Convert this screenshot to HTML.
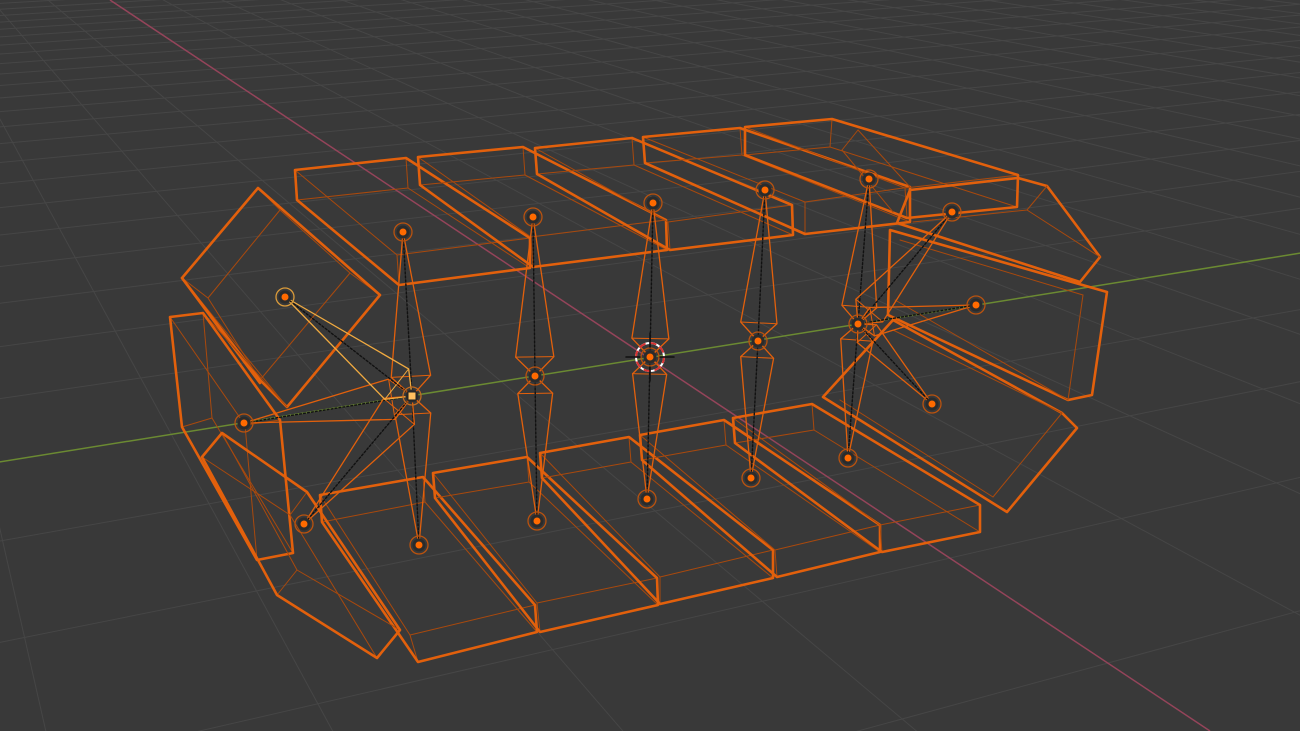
<!DOCTYPE html>
<html><head><meta charset="utf-8"><style>
html,body{margin:0;padding:0;background:#393939;overflow:hidden}
svg{display:block}
</style></head><body>
<svg id="s" xmlns="http://www.w3.org/2000/svg" width="1300" height="731" viewBox="0 0 1300 731">
<rect width="1300" height="731" fill="#393939"/>
<g id="grid"></g>
<line x1="-300" y1="510" x2="1600" y2="205" stroke="#6b8a32" stroke-width="1.5"/>
<line x1="110" y1="0" x2="1210" y2="731" stroke="#94445a" stroke-width="1.5"/>
<g id="obj" fill="none" stroke-linejoin="round" stroke-linecap="round"></g>
</svg>
<script>
(function(){
var NS="http://www.w3.org/2000/svg";
var grid=document.getElementById('grid'),obj=document.getElementById('obj');
function el(p,tag,a){var e=document.createElementNS(NS,tag);for(var k in a)e.setAttribute(k,a[k]);p.appendChild(e);return e;}
var O=[648,358],V2=[4500,-260],V1=[-160,-175],s=0.0367,t=0.0909;
function P(u,v){var d=1+s*u+t*v;return[(O[0]+s*u*V2[0]+t*v*V1[0])/d,(O[1]+s*u*V2[1]+t*v*V1[1])/d];}
var gs="#464646";
for(var u=-26;u<=120;u++){var vmin=(0.02-1-s*u)/t;if(vmin<-40)vmin=-40;var a=P(u,vmin),b=P(u,400);
 if(u==0)continue;el(grid,'line',{x1:a[0],y1:a[1],x2:b[0],y2:b[1],stroke:gs,'stroke-width':1});}
for(var v=-10;v<=150;v++){var umin=(0.02-1-t*v)/s;if(umin<-60)umin=-60;var a=P(umin,v),b=P(600,v);
 if(v==0)continue;el(grid,'line',{x1:a[0],y1:a[1],x2:b[0],y2:b[1],stroke:gs,'stroke-width':1});}

var TH="#e2600c",TN="#a9490d";
function line(a,b,c,w,extra){var o={x1:a[0],y1:a[1],x2:b[0],y2:b[1],stroke:c,'stroke-width':w};for(var k in extra)o[k]=extra[k];return el(obj,'line',o);}
function hull(pts){pts=pts.slice().sort(function(a,b){return a[0]-b[0]||a[1]-b[1];});
 function cr(o,a,b){return(a[0]-o[0])*(b[1]-o[1])-(a[1]-o[1])*(b[0]-o[0]);}
 var lo=[],up=[];for(var i=0;i<pts.length;i++){while(lo.length>=2&&cr(lo[lo.length-2],lo[lo.length-1],pts[i])<=0)lo.pop();lo.push(pts[i]);}
 for(var i=pts.length-1;i>=0;i--){while(up.length>=2&&cr(up[up.length-2],up[up.length-1],pts[i])<=0)up.pop();up.push(pts[i]);}
 up.pop();lo.pop();return lo.concat(up);}
function poly(pts,c,w){el(obj,'polygon',{points:pts.map(function(p){return p.join(',')}).join(' '),stroke:c,'stroke-width':w});}
function box(b,f){for(var i=0;i<4;i++){line(b[i],b[(i+1)%4],TN,1);line(f[i],f[(i+1)%4],TN,1);line(b[i],f[i],TN,1);}
 poly(hull(b.concat(f)),TH,2.6);}
// top plates
box([[295,170],[406,158],[408,188],[297,200]],[[397,255],[530,238],[530,268],[399,285]]);
box([[418,157],[523,147],[525,175],[420,185]],[[531,237],[666,220],[667,250],[533,267]]);
box([[535,148],[632,138],[634,165],[537,174]],[[668,222],[792,205],[793,235],[670,250]]);
box([[643,137],[740,128],[742,155],[645,163]],[[805,202],[910,187],[910,222],[805,234]]);
box([[745,127],[832,119],[830,147],[745,155]],[[905,188],[1018,175],[1017,207],[907,218]]);
line([858,130],[842,150],TN,1);line([858,130],[910,187],TN,1);line([842,150],[893,212],TN,1);
// bottom plates
box([[320,495],[423,477],[425,502],[322,522]],[[410,635],[535,605],[537,632],[418,662]]);
box([[433,473],[527,457],[529,482],[435,498]],[[537,603],[657,578],[658,605],[540,632]]);
box([[540,453],[629,437],[631,462],[542,478]],[[660,577],[773,550],[773,578],[660,604]]);
box([[640,435],[724,420],[726,445],[642,460]],[[775,550],[880,525],[880,552],[777,577]]);
box([[733,418],[812,404],[814,430],[735,443]],[[880,525],[980,505],[980,532],[882,552]]);
// left end
box([[258,188],[380,295],[287,407],[182,278]],[[280,210],[350,273],[260,380],[208,298]]);
line([182,278],[260,383],TH,2.6);line([205,315],[287,407],TN,1);
box([[170,317],[203,313],[212,418],[182,427]],[[245,425],[280,420],[293,553],[257,560]]);
box([[202,457],[222,433],[307,492],[290,515]],[[277,595],[297,570],[400,630],[377,658]]);
// right end
poly([[897,223],[910,190],[1018,178],[1047,186],[1100,257],[1080,282]],TH,2.6);
line([1027,210],[1047,186],TN,1);line([1027,210],[1100,257],TN,1);line([913,222],[1027,210],TN,1);
poly([[890,230],[1107,292],[1092,395],[1068,400],[888,315]],TH,2.6);
line([1083,295],[1068,400],TN,1);line([900,240],[1083,295],TN,1);line([895,300],[1068,400],TN,1);
poly([[823,397],[893,320],[1062,413],[1077,428],[1007,512]],TH,2.6);
line([993,497],[1062,413],TN,1);line([840,400],[993,497],TN,1);line([893,330],[1062,413],TN,1);

// bones
var joints=[];
function bone(h,tl,c){var dx=tl[0]-h[0],dy=tl[1]-h[1],L=Math.hypot(dx,dy);var m=[h[0]+dx*0.12,h[1]+dy*0.12];
 var n=[-dy/L*L*0.12,dx/L*L*0.12];var p1=[m[0]+n[0],m[1]+n[1]],p2=[m[0]-n[0],m[1]-n[1]];
 el(obj,'polygon',{points:[h,p1,tl,p2].map(function(p){return p.join(',')}).join(' '),stroke:c,'stroke-width':1.3});
 line(p1,p2,c,1);}
function dots(a,b){line(a,b,"#111",1.4,{'stroke-dasharray':'2,2'});}
var chains=[[[403,232],[412,396],[419,545]],[[533,217],[535,376],[537,521]],[[653,203],[650,357],[647,499]],[[765,190],[758,341],[751,478]],[[869,179],[858,324],[848,458]]];
chains.forEach(function(c){bone(c[1],c[0],TH);bone(c[1],c[2],TH);dots(c[0],c[1]);dots(c[1],c[2]);joints.push(c[0],c[2]);});
var M1=[412,396],M5=[858,324];
[[244,423],[304,524]].forEach(function(p){bone(M1,p,TH);dots(M1,p);joints.push(p);});
[[952,212],[976,305],[932,404]].forEach(function(p){bone(M5,p,TH);dots(M5,p);joints.push(p);});
bone(M1,[285,297],"#f0aa40");dots(M1,[285,297]);
function joint(p,c,ring){el(obj,'circle',{cx:p[0],cy:p[1],r:9,stroke:ring,'stroke-width':1.3,fill:'none'});
 el(obj,'circle',{cx:p[0],cy:p[1],r:6.5,fill:'#2b2b2b',stroke:'none'});
 el(obj,'circle',{cx:p[0],cy:p[1],r:3.5,fill:c,stroke:'none'});}
joints.forEach(function(p){joint(p,'#ff6a00','#b8520f');});
[[535,376],[758,341],[858,324]].forEach(function(p){joint(p,'#ff6a00','#b8520f');});
joint([285,297],'#ff6a00','#d99a3a');
joint(M1,'#ffc070','#c06a20');
el(obj,'rect',{x:408,y:392,width:8,height:8,fill:'#ffc060',stroke:'#222','stroke-width':1});
joint([650,357],'#ff6a00','#b8520f');
// 3d cursor
el(obj,'circle',{cx:650,cy:357,r:14,stroke:'#ffffff','stroke-width':2,fill:'none'});
el(obj,'circle',{cx:650,cy:357,r:14,stroke:'#d83030','stroke-width':2,fill:'none','stroke-dasharray':'5.5,5.5'});
[[[626,357],[640,357]],[[660,357],[674,357]],[[650,333],[650,347]],[[650,367],[650,381]]].forEach(function(l){line(l[0],l[1],'#111',1.5);});
})();
</script>
</body></html>
